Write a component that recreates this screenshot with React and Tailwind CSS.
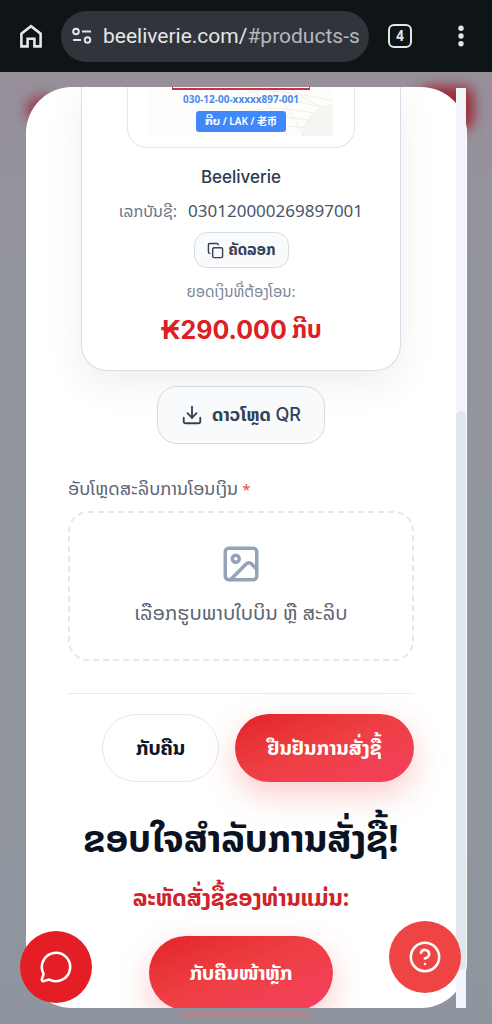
import { Copy, Download } from "lucide-react";

const lao = "font-['Noto_Sans_Lao','DejaVu_Sans',sans-serif]";

function BrowserBar() {
  return (
    <header className="flex h-[72px] shrink-0 items-center bg-[#0f1416] pl-[19px] pr-[19px] text-[#e3e6e8]">
      <button aria-label="Home" className="shrink-0">
        <svg className="size-6" viewBox="0 0 24 24" fill="none" stroke="currentColor" strokeWidth="2.6">
          <path d="M2.4 22.4V9.6L12 2.2l9.6 7.4v12.8h-6.2v-7.6H8.6v7.6z" />
        </svg>
      </button>
      <button className="ml-[18px] flex h-[51px] min-w-0 flex-1 items-center rounded-full bg-[#31353b] pl-[10px] text-left">
        <svg className="size-[22px] shrink-0" viewBox="0 0 22 22" fill="none" stroke="currentColor" strokeWidth="2">
          <circle cx="5" cy="6.5" r="2.8" />
          <path d="M11 6.5h9M2 15h8" />
          <circle cx="16.5" cy="15" r="2.8" />
        </svg>
        <span className="ml-[10px] whitespace-nowrap font-['Roboto',sans-serif] text-[21px] leading-7">
          beeliverie.com/<span className="text-[#b4b9be]">#products-s</span>
        </span>
      </button>
      <button
        aria-label="Tabs"
        className="ml-[19px] flex size-6 shrink-0 items-center justify-center rounded-[6px] border-2 border-[#e3e6e8] font-['Roboto',sans-serif] text-[14px] font-bold"
      >
        4
      </button>
      <button aria-label="Menu" className="ml-[37px] flex w-6 shrink-0 justify-center">
        <svg className="h-6 w-2" viewBox="0 0 8 24" fill="currentColor">
          <circle cx="4" cy="4.2" r="2.7" />
          <circle cx="4" cy="12" r="2.7" />
          <circle cx="4" cy="19.8" r="2.7" />
        </svg>
      </button>
    </header>
  );
}

function QrFrame() {
  return (
    <div className="mx-auto w-[228px] rounded-b-[20px] border border-t-0 border-[#dfe7ec] px-[21px] pb-[11px]">
      <div className="relative h-[49px] overflow-hidden bg-[#fdfdfc]">
        <svg className="absolute right-0 top-0 h-full w-24" viewBox="0 0 96 49" fill="none" stroke="#f1eeea">
          <path d="M0 8q30-10 96 6M4 16q40-10 92 8M10 24q40-8 86 8M18 32q40-6 78 8M26 40q30-4 70 6M10 0q24 14 40 49M30 0q22 16 36 49M50 0q18 12 46 26" />
          <circle cx="98" cy="50" r="32" fill="#f8f6f3" />
          <circle cx="98" cy="50" r="27" strokeDasharray="2 2" />
          <circle cx="98" cy="50" r="21" strokeDasharray="2 2" />
          <circle cx="98" cy="50" r="15" strokeDasharray="2 2" />
        </svg>
        <div className="relative flex flex-col items-center font-['Noto_Sans','DejaVu_Sans','Noto_Sans_CJK_SC',sans-serif]">
          <div className="h-[3px] w-[138px] border border-t-0 border-b-2 border-[#c3363c]" />
          <p className="mt-[2px] text-[10px] font-bold leading-[15px] text-[#4b8ae8]">030-12-00-xxxxx897-001</p>
          <p className="mt-[4px] flex h-[21px] w-[90px] items-center justify-center whitespace-nowrap rounded-[3px] bg-[#4188fb] text-[10px] font-semibold text-white">
            ກີບ / LAK / 老币
          </p>
        </div>
      </div>
    </div>
  );
}

function PaymentCard() {
  return (
    <section className="mx-[13px] flex flex-col items-center rounded-b-[26px] border border-t-0 border-[#d5deea] bg-white pb-6 shadow-[0_12px_40px_rgba(0,0,0,0.07)]">
      <QrFrame />
      <h2 className="mt-[17px] font-['Inter',sans-serif] text-[17px] font-medium leading-6 text-[#2f3b4c]">Beeliverie</h2>
      <p className="mt-[10px] flex items-center gap-[11px] leading-6">
        <span className="text-[16px] text-[#64748b]">ເລກບັນຊີ:</span>
        <span className="font-['Noto_Sans',sans-serif] text-[17px] text-[#475569]">030120000269897001</span>
      </p>
      <button className="mt-[9px] flex h-9 w-[95px] items-center justify-center gap-[5px] rounded-[13px] border border-[#d3dde7] bg-[#f8fafc] text-[15px] font-bold text-[#334155]">
        <Copy className="size-[17px]" strokeWidth={2} />
        ຄັດລອກ
      </button>
      <p className="mt-3 text-[15px] leading-6 text-[#7a8699]">ຍອດເງິນທີ່ຕ້ອງໂອນ:</p>
      <p className="mt-[10px] flex items-center gap-[5px] leading-8 font-bold text-[#dc2024]">
        <span className="font-['Inter',sans-serif] text-[25px]">₭290.000</span>
        <span className="text-[24px]">ກີບ</span>
      </p>
    </section>
  );
}

const primary =
  "flex items-center justify-center whitespace-nowrap rounded-full bg-linear-to-br from-[#e32227] via-[#ee4044] to-[#f43f5e] font-bold text-white shadow-[0_12px_32px_rgba(239,68,68,0.28)]";

function Dialog() {
  return (
    <div className="relative min-h-0 flex-1">
      <div className="h-full overflow-hidden rounded-[46px] bg-white">
        <div className="flex flex-col pl-[42px] pr-[53px]">
          <PaymentCard />
          <button className="mx-auto mt-[15px] flex h-[58px] w-[168px] shrink-0 items-center justify-center gap-[9px] rounded-[20px] border border-[#d3dbe4] bg-[#f8fafc] text-[#334155]">
            <Download className="size-[22px]" strokeWidth={2} />
            <span className="whitespace-nowrap text-[18px] font-bold leading-7">ດາວໂຫຼດ <span className="font-['Inter',sans-serif] font-medium">QR</span></span>
          </button>
          <label htmlFor="slip" className="mt-[33px] whitespace-nowrap text-[18px] leading-6 text-[#5b6475]">
            ອັບໂຫຼດສະລິບການໂອນເງິນ<span className="ml-1 text-[15px] text-[#ef4444]">*</span>
          </label>
          <label htmlFor="slip" className="mt-[9px] flex h-[150px] shrink-0 flex-col items-center rounded-[20px] border-2 border-dashed border-[#e3e8eb] pt-[30px]">
            <svg className="size-[42px]" viewBox="0 0 24 24" fill="none" stroke="#94a3b8" strokeWidth="2" strokeLinecap="round" strokeLinejoin="round">
              <rect x="3" y="3" width="18" height="18" rx="2" />
              <circle cx="9" cy="9" r="2" />
              <path d="m21 15-3.086-3.086a2 2 0 0 0-2.828 0L6 21" />
            </svg>
            <span className="mt-[14px] whitespace-nowrap text-[20px] leading-7 text-[#5b6472]">ເລືອກຮູບພາບໃບບິນ ຫຼື ສະລິບ</span>
            <input id="slip" type="file" className="sr-only" />
          </label>
          <div className="mt-8 flex justify-end gap-4 border-t border-[#e9ecef] pt-5">
            <button className="h-[68px] w-[117px] rounded-full border border-[#e2e7ea] bg-white text-[20px] font-bold text-[#0f172a]">ກັບຄືນ</button>
            <button className={`${primary} h-[68px] w-[179px] text-[20px]`}>ຢືນຢັນການສັ່ງຊື້</button>
          </div>
          <h1 className="mt-[31px] whitespace-nowrap text-center text-[37px] font-bold leading-[52px] text-[#0b1322]">ຂອບໃຈສຳລັບການສັ່ງຊື້!</h1>
          <p className="mt-[17px] whitespace-nowrap text-center text-[23px] font-bold leading-8 text-[#d0232b]">ລະຫັດສັ່ງຊື້ຂອງທ່ານແມ່ນ:</p>
          <button className={`${primary} mx-auto mt-[22px] h-[74px] w-[184px] shrink-0 text-[20px]`}>ກັບຄືນໜ້າຫຼັກ</button>
        </div>
      </div>
      <div className="absolute bottom-0 right-px top-px w-[10px] bg-[#f1f5f9]">
        <div className="mt-[323px] h-[559px] rounded-full bg-[#e0e6eb]" />
      </div>
    </div>
  );
}

export default function App() {
  return (
    <div className={`relative flex h-screen flex-col overflow-hidden bg-[#93969f] ${lao}`}>
      <BrowserBar />
      <main className="relative flex min-h-0 flex-1 flex-col overflow-hidden bg-linear-to-b from-[#978f99] via-[#93959e] via-20% to-[#8f959e] pb-4 pl-[26px] pr-[25px] pt-[15px]">
        <div className="absolute left-[26px] top-6 h-7 w-9 rounded-full bg-[#9c3f52] blur-[6px]" />
        <div className="absolute right-[18px] top-[14px] h-11 w-14 rounded-xl bg-[#9c2d3d] blur-[6px]" />
        <div className="absolute bottom-[7px] left-[182px] right-[182px] h-[5px] bg-[#ad8790]" />
        <Dialog />
      </main>
      <button aria-label="Chat" className="absolute bottom-[21px] left-5 flex size-[72px] items-center justify-center rounded-full bg-[#e31e24] text-white">
        <svg className="size-[34px]" viewBox="0 0 24 24" fill="none" stroke="currentColor" strokeWidth="1.8" strokeLinecap="round" strokeLinejoin="round">
          <path d="M2.992 16.342a2 2 0 0 1 .094 1.167l-1.065 3.29a1 1 0 0 0 1.236 1.168l3.413-.998a2 2 0 0 1 1.099.092 10 10 0 1 0-4.777-4.719" />
        </svg>
      </button>
      <button aria-label="Help" className="absolute bottom-[31px] right-[31px] flex size-[72px] items-center justify-center rounded-full bg-[#ef4444] text-white">
        <svg className="size-[34px]" viewBox="0 0 24 24" fill="none" stroke="currentColor" strokeWidth="1.8" strokeLinecap="round" strokeLinejoin="round">
          <circle cx="12" cy="12" r="10" />
          <path d="M9.09 9a3 3 0 0 1 5.83 1c0 2-3 3-3 3M12 17h.01" />
        </svg>
      </button>
    </div>
  );
}
